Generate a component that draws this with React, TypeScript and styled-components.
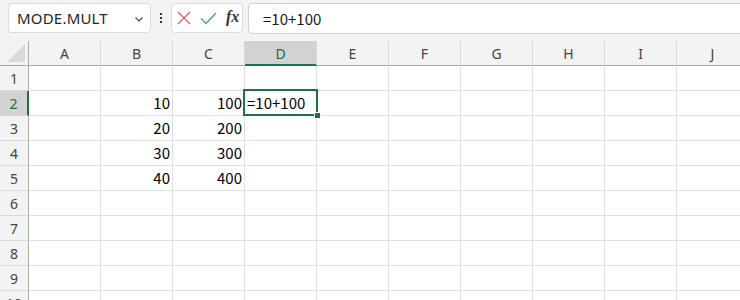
import React from 'react'
import styled, { createGlobalStyle } from 'styled-components'

const GlobalStyle = createGlobalStyle`
    html, body {
        margin: 0;
        padding: 0;
        background: #ffffff;
        overflow: hidden;
    }
    body {
        font-family: 'Noto Sans', 'Noto Sans CJK JP', sans-serif;
    }
`

const columns = ['A', 'B', 'C', 'D', 'E', 'F', 'G', 'H', 'I', 'J']
const data: Record<number, Record<string, string>> = {
    2: { B: '10', C: '100', D: '=10+100' },
    3: { B: '20', C: '200' },
    4: { B: '30', C: '300' },
    5: { B: '40', C: '400' },
}
const rows = [1, 2, 3, 4, 5, 6, 7, 8, 9, 10]

const App: React.FC = () => {
    return (
        <Page>
            <GlobalStyle />
            <Toolbar>
                <NameBox>
                    <span>MODE.MULT</span>
                    <svg width='12' height='12' viewBox='0 0 12 12' fill='none' stroke='#444' strokeWidth='1.1'>
                        <path d='M2.5 4.5 L6 8 L9.5 4.5' />
                    </svg>
                </NameBox>
                <Dots>
                    <svg width='4' height='12' viewBox='0 0 4 12' fill='#333'>
                        <rect x='1' y='1' width='2' height='2' />
                        <rect x='1' y='5' width='2' height='2' />
                        <rect x='1' y='9' width='2' height='2' />
                    </svg>
                </Dots>
                <FxBox>
                    <svg width='14' height='14' viewBox='0 0 14 14' fill='none' stroke='#e8595b' strokeWidth='1.2'>
                        <path d='M1 1 L13 13 M13 1 L1 13' />
                    </svg>
                    <svg width='17' height='13' viewBox='0 0 17 13' fill='none' stroke='#4aa564' strokeWidth='1.3'>
                        <path d='M1 6.5 L6 11.5 L16 1' />
                    </svg>
                    <FxText>fx</FxText>
                </FxBox>
                <FormulaBar>=10+100</FormulaBar>
            </Toolbar>
            <Sheet>
                <Corner>
                    <svg width='18' height='18' viewBox='0 0 18 18'>
                        <polygon points='18,0 18,18 0,18' fill='#d9d9d9' />
                    </svg>
                </Corner>
                {columns.map((c) => (
                    <ColHeader key={c} $active={c === 'D'}>
                        {c}
                    </ColHeader>
                ))}
                {rows.map((r) => (
                    <React.Fragment key={r}>
                        <RowHeader $active={r === 2}>{r}</RowHeader>
                        {columns.map((c) => {
                            const v = data[r]?.[c] ?? ''
                            const selected = r === 2 && c === 'D'
                            return (
                                <Cell key={c} $text={v.startsWith('=')} $selected={selected}>
                                    {v}
                                    {selected && (
                                        <Selection>
                                            <Handle />
                                        </Selection>
                                    )}
                                </Cell>
                            )
                        })}
                    </React.Fragment>
                ))}
            </Sheet>
        </Page>
    )
}

const Page = styled.div`
    width: 740px;
    height: 300px;
    overflow: hidden;
    background: #f3f3f3;
`

const Toolbar = styled.div`
    height: 41px;
    display: flex;
    align-items: flex-start;
    padding-top: 3px;
    box-sizing: border-box;
    padding-left: 8px;
`

const NameBox = styled.div`
    width: 143px;
    height: 30px;
    box-sizing: border-box;
    background: #fff;
    border: 1px solid #dcdcdc;
    border-radius: 4px;
    display: flex;
    align-items: center;
    justify-content: space-between;
    padding: 0 5px 0 8px;
    font-size: 15px;
    color: #262626;
    letter-spacing: 0.2px;
    svg {
        margin-top: 1px;
    }
`

const Dots = styled.div`
    width: 20px;
    height: 30px;
    display: flex;
    align-items: center;
    justify-content: center;
`

const FxBox = styled.div`
    width: 72px;
    height: 30px;
    box-sizing: border-box;
    background: #fff;
    border: 1px solid #dcdcdc;
    border-radius: 4px;
    display: flex;
    align-items: center;
    gap: 9px;
    padding-left: 5px;
`

const FxText = styled.span`
    font-family: 'Liberation Serif', serif;
    font-style: italic;
    font-weight: bold;
    font-size: 16px;
    color: #333;
    margin-top: -2px;
`

const FormulaBar = styled.div`
    flex: 1;
    height: 31px;
    margin-left: 5px;
    margin-right: -10px;
    box-sizing: border-box;
    background: #fff;
    border: 1px solid #d0d0d0;
    border-radius: 4px 0 0 4px;
    display: flex;
    align-items: center;
    padding-left: 14px;
    font-family: 'Noto Sans CJK JP', 'Noto Sans', sans-serif;
    font-size: 15px;
    color: #1a1a1a;
`

const Sheet = styled.div`
    display: grid;
    grid-template-columns: 29px repeat(10, 72px);
    grid-auto-rows: 25px;
    width: 749px;
    background: #fff;
`

const Corner = styled.div`
    background: #f3f3f3;
    border-right: 1px solid #ababab;
    border-bottom: 1px solid #ababab;
    box-sizing: border-box;
    display: flex;
    align-items: flex-end;
    justify-content: flex-end;
    padding: 0 3px 3px 0;
`

const ColHeader = styled.div<{ $active?: boolean }>`
    box-sizing: border-box;
    background: ${(p) => (p.$active ? '#d2d2d2' : '#f3f3f3')};
    border-right: 1px solid #d8d8d8;
    border-bottom: ${(p) => (p.$active ? '2px solid #1e7145' : '1px solid #ababab')};
    display: flex;
    align-items: center;
    justify-content: center;
    font-size: 14px;
    color: ${(p) => (p.$active ? '#1e6b40' : '#444')};
    padding-top: ${(p) => (p.$active ? '1px' : '0')};
`

const RowHeader = styled.div<{ $active?: boolean }>`
    box-sizing: border-box;
    background: ${(p) => (p.$active ? '#d2d2d2' : '#f3f3f3')};
    border-right: ${(p) => (p.$active ? '2px solid #1e7145' : '1px solid #ababab')};
    border-bottom: 1px solid #d8d8d8;
    display: flex;
    align-items: center;
    justify-content: center;
    font-size: 14px;
    color: ${(p) => (p.$active ? '#1e6b40' : '#444')};
    padding-top: 1px;
`

const Cell = styled.div<{ $text?: boolean; $selected?: boolean }>`
    position: relative;
    box-sizing: border-box;
    border-right: 1px solid #e1e1e1;
    border-bottom: 1px solid #e1e1e1;
    display: flex;
    align-items: flex-end;
    justify-content: ${(p) => (p.$text ? 'flex-start' : 'flex-end')};
    padding: 0 2px 2px 2px;
    font-family: 'Noto Sans CJK JP', 'Noto Sans', sans-serif;
    font-size: 15px;
    line-height: 20px;
    color: #000;
    white-space: nowrap;
    z-index: ${(p) => (p.$selected ? 2 : 'auto')};
`

const Selection = styled.div`
    position: absolute;
    left: -2px;
    top: -2px;
    right: -2px;
    bottom: -1px;
    border: 2px solid #1e7145;
    pointer-events: none;
`

const Handle = styled.div`
    position: absolute;
    right: -4px;
    bottom: -4px;
    width: 5px;
    height: 5px;
    background: #1e7145;
    border: 1px solid #fff;
    border-right: none;
    border-bottom: none;
`

export default App
